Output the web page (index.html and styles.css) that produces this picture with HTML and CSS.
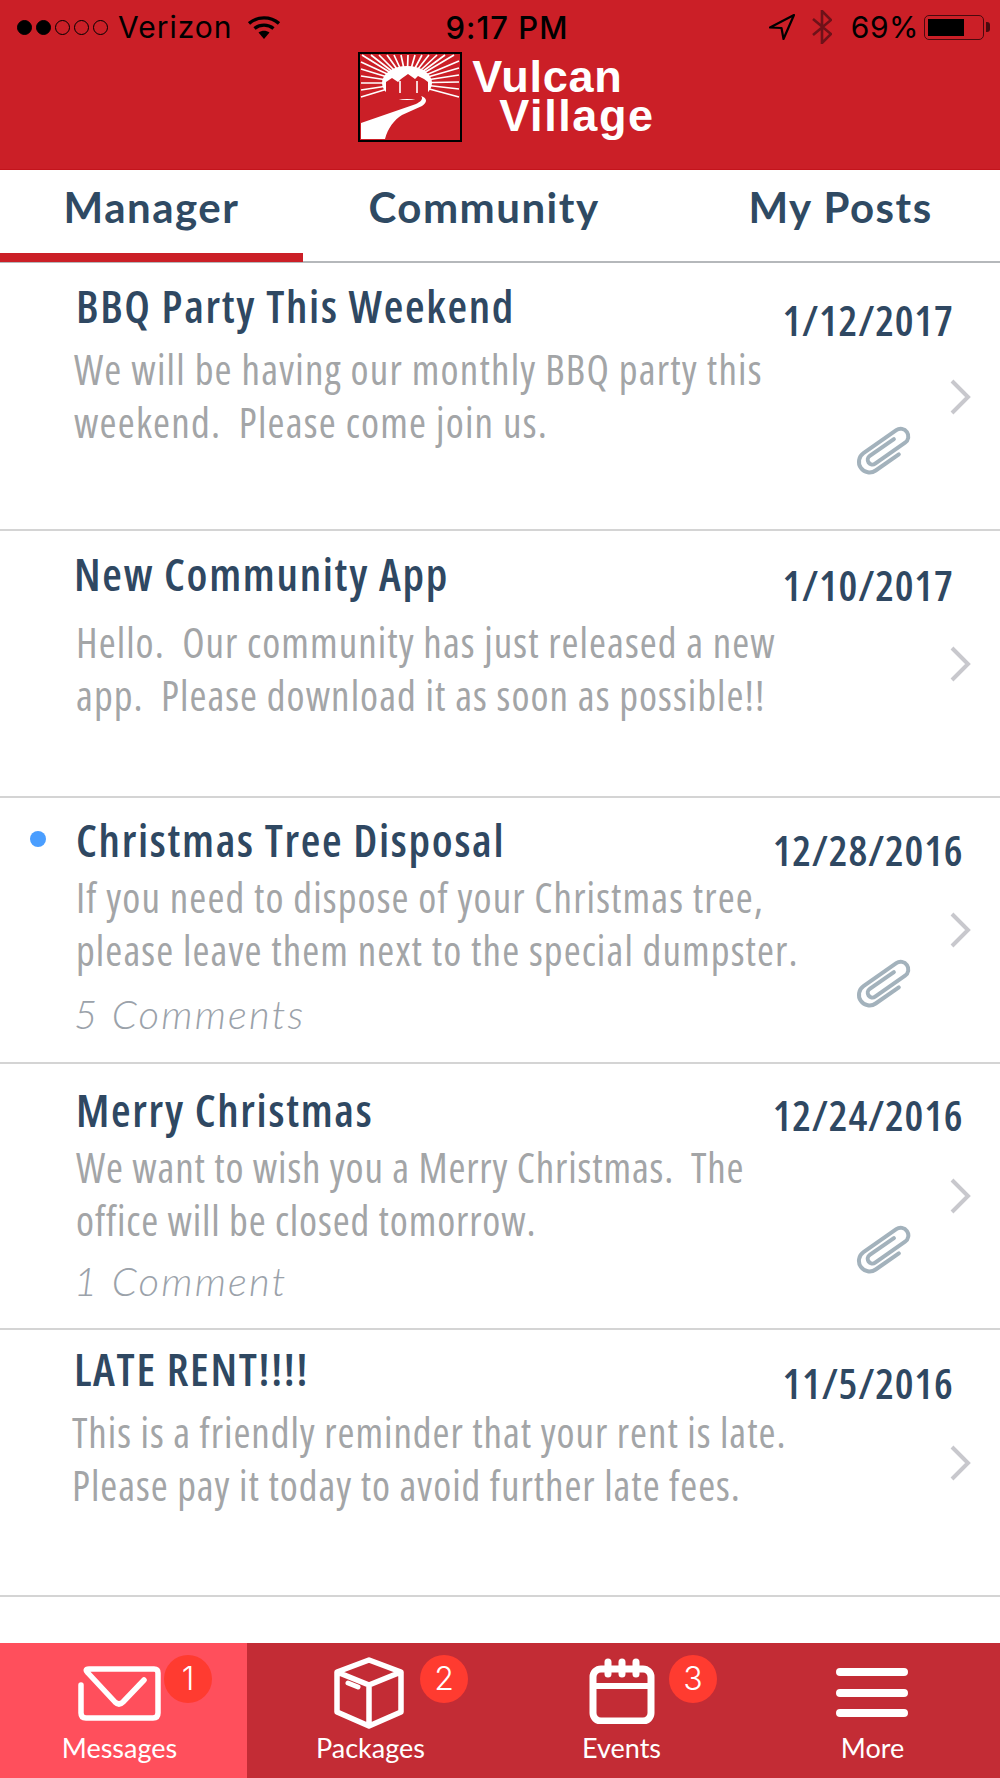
FILE: index.html

```html
<!DOCTYPE html>
<html lang="en">
<head>
  <meta charset="UTF-8">
  <meta name="viewport" content="width=device-width, initial-scale=1.0">
  <title>Vulcan Village</title>
  <link rel="stylesheet" href="styles.css">
</head>
<body>
  <div class="app">
    <header class="header">
      <div class="status">
        <div class="status-left">
          <div class="signal">
            <span class="dot on"></span><span class="dot on"></span><span class="dot"></span><span class="dot"></span><span class="dot"></span>
          </div>
          <span class="carrier">Verizon</span>
          <svg class="wifi" width="32" height="24" viewBox="0 0 32 24">
            <path d="M1 8.5C9.5 1 22.500 1 31 8.500" fill="none" stroke="#000" stroke-width="3.400"/>
            <path d="M6.500 13.500C12 9 20 9 25.500 13.500" fill="none" stroke="#000" stroke-width="3.400"/>
            <path d="M10.500 17.500C14 15 18 15 21.500 17.500L16 24Z" fill="#000"/>
          </svg>
        </div>
        <span class="clock">9:17 PM</span>
        <div class="status-right">
          <svg width="26" height="26" viewBox="0 0 26 26">
            <path d="M25 1L1 13.500L12.500 14L14.500 25Z" fill="none" stroke="#000" stroke-width="2.200" stroke-linejoin="round"/>
          </svg>
          <svg class="bt" width="20" height="34" viewBox="0 0 20 34">
            <path d="M1 9L19 24L10 33V1L19 10L1 25" fill="none" stroke="#6e1219" stroke-width="2.600"/>
          </svg>
          <span class="percent">69%</span>
          <div class="battery"><div class="battery-level"></div></div>
        </div>
      </div>
      <div class="brand">
        <svg class="logo" width="104" height="90" viewBox="0 0 104 90">
          <rect x="1" y="1" width="102" height="88" fill="#cb1f27" stroke="#000" stroke-width="2"/>
          <path d="M49 31L4 3M49 31L13 3M49 31L21 3M49 31L29 3M49 31L36 3M49 31L43 3M49 31L50 3M49 31L57 3M49 31L64 3M49 31L71 3M49 31L79 3M49 31L87 3M49 31L96 3M49 31L3 10M49 31L3 17M49 31L3 24M49 31L3 31M49 31L3 38M49 31L3 45M49 31L101 9M49 31L101 16M49 31L101 23M49 31L101 30M49 31L101 37M49 31L101 45" fill="none" stroke="#fff" stroke-width="1.700"/>
          <ellipse cx="49" cy="31" rx="25" ry="17" fill="#fff"/>
          <path d="M28 47V30L34 26L40 30L43 27L50 22L57 27L60 24L66 27L70 30V47Z" fill="#cb1f27"/>
          <path d="M42 29V41M59 29V41" fill="none" stroke="#fff" stroke-width="1.600"/>
          <path d="M63 44C66 47 62 50 58 52L3 71V87H27C30 76 36 68 44 63L64 54C70 50 69 46 63 44Z" fill="#fff"/>
        </svg>
        <div class="brand-name"><span class="brand-top">Vulcan</span><span class="brand-bottom">Village</span></div>
      </div>
    </header>

    <nav class="tabs">
      <div class="tab active">Manager</div>
      <div class="tab">Community</div>
      <div class="tab last">My Posts</div>
    </nav>

    <div class="list">
      <div class="row row-a">
        <div class="text">
          <div class="title">BBQ Party This Weekend</div>
          <div class="body">We will be having our monthly BBQ party this<br>weekend.&nbsp; Please come join us.</div>
        </div>
        <div class="meta">
          <div class="date">1/12/2017</div>
          <svg class="chevron" width="22" height="36" viewBox="0 0 22 36"><path d="M3 2L19 18L3 34" fill="none" stroke="#c8c8cd" stroke-width="4"/></svg>
          <svg class="clip" width="66" height="52" viewBox="0 0 56 44"><g transform="rotate(-35 28 22) translate(0 9)"><path d="M40 9H15a4 4 0 0 0 0 8H46a6.500 6.500 0 0 0 0 -13H12a9 9 0 0 0 0 18H36" fill="none" stroke="#a3b2bc" stroke-width="3.400" stroke-linecap="round"/></g></svg>
        </div>
      </div>

      <div class="row row-b">
        <div class="text">
          <div class="title">New Community App</div>
          <div class="body">Hello.&nbsp; Our community has just released a new<br>app.&nbsp; Please download it as soon as possible!!</div>
        </div>
        <div class="meta">
          <div class="date">1/10/2017</div>
          <svg class="chevron" width="22" height="36" viewBox="0 0 22 36"><path d="M3 2L19 18L3 34" fill="none" stroke="#c8c8cd" stroke-width="4"/></svg>
        </div>
      </div>

      <div class="row row-c">
        <span class="unread"></span>
        <div class="text">
          <div class="title">Christmas Tree Disposal</div>
          <div class="body">If you need to dispose of your Christmas tree,<br>please leave them next to the special dumpster.</div>
          <div class="comments">5 Comments</div>
        </div>
        <div class="meta">
          <div class="date">12/28/2016</div>
          <svg class="chevron" width="22" height="36" viewBox="0 0 22 36"><path d="M3 2L19 18L3 34" fill="none" stroke="#c8c8cd" stroke-width="4"/></svg>
          <svg class="clip" width="66" height="52" viewBox="0 0 56 44"><g transform="rotate(-35 28 22) translate(0 9)"><path d="M40 9H15a4 4 0 0 0 0 8H46a6.500 6.500 0 0 0 0 -13H12a9 9 0 0 0 0 18H36" fill="none" stroke="#a3b2bc" stroke-width="3.400" stroke-linecap="round"/></g></svg>
        </div>
      </div>

      <div class="row row-d">
        <div class="text">
          <div class="title">Merry Christmas</div>
          <div class="body">We want to wish you a Merry Christmas.&nbsp; The<br>office will be closed tomorrow.</div>
          <div class="comments">1 Comment</div>
        </div>
        <div class="meta">
          <div class="date">12/24/2016</div>
          <svg class="chevron" width="22" height="36" viewBox="0 0 22 36"><path d="M3 2L19 18L3 34" fill="none" stroke="#c8c8cd" stroke-width="4"/></svg>
          <svg class="clip" width="66" height="52" viewBox="0 0 56 44"><g transform="rotate(-35 28 22) translate(0 9)"><path d="M40 9H15a4 4 0 0 0 0 8H46a6.500 6.500 0 0 0 0 -13H12a9 9 0 0 0 0 18H36" fill="none" stroke="#a3b2bc" stroke-width="3.400" stroke-linecap="round"/></g></svg>
        </div>
      </div>

      <div class="row row-e">
        <div class="text">
          <div class="title">LATE RENT!!!!</div>
          <div class="body">This is a friendly reminder that your rent is late.<br>Please pay it today to avoid further late fees.</div>
        </div>
        <div class="meta">
          <div class="date">11/5/2016</div>
          <svg class="chevron" width="22" height="36" viewBox="0 0 22 36"><path d="M3 2L19 18L3 34" fill="none" stroke="#c8c8cd" stroke-width="4"/></svg>
        </div>
      </div>
    </div>

    <footer class="tabbar">
      <div class="bar-item current">
        <svg class="bar-icon icon-mail" width="84" height="56" viewBox="0 0 84 56">
          <path d="M4 20V48Q4 53 9 53H76Q81 53 81 48V8Q81 4 77 4H12Q7 4 11 8L38 37Q42 41 46 37L67 15" fill="none" stroke="#fff" stroke-width="5.500" stroke-linecap="round" stroke-linejoin="round"/>
        </svg>
        <span class="badge badge-1">1</span>
        <span class="bar-label">Messages</span>
      </div>
      <div class="bar-item">
        <svg class="bar-icon icon-box" width="70" height="72" viewBox="0 0 70 72">
          <path d="M35 3L67 15V55L35 69L3 55V15ZM3 15L35 28L67 15M35 28V69" fill="none" stroke="#fff" stroke-width="5.500" stroke-linejoin="round"/>
          <path d="M14 26L24 30" fill="none" stroke="#fff" stroke-width="5" stroke-linecap="round"/>
        </svg>
        <span class="badge badge-2">2</span>
        <span class="bar-label">Packages</span>
      </div>
      <div class="bar-item">
        <svg class="bar-icon icon-cal" width="66" height="66" viewBox="0 0 66 66">
          <rect x="4" y="11" width="58" height="52" rx="8" fill="none" stroke="#fff" stroke-width="7"/>
          <path d="M4 28H62" stroke="#fff" stroke-width="6"/>
          <path d="M19 4V16M33 4V16M47 4V16" stroke="#fff" stroke-width="7" stroke-linecap="round"/>
        </svg>
        <span class="badge badge-3">3</span>
        <span class="bar-label">Events</span>
      </div>
      <div class="bar-item">
        <svg class="bar-icon icon-menu" width="72" height="54" viewBox="0 0 72 54">
          <path d="M4 6H68M4 27H68M4 47H68" stroke="#fff" stroke-width="8" stroke-linecap="round"/>
        </svg>
        <span class="bar-label">More</span>
      </div>
    </footer>
  </div>
</body>
</html>
```

FILE: styles.css

```css
* {
  box-sizing: border-box;
}
body {
  margin: 0;
  background: #fff;
  font-family: "Open Sans", sans-serif;
}
.app {
  width: 1000px;
  height: 1778px;
  display: flex;
  flex-direction: column;
  overflow: hidden;
}

/* header */
.header {
  height: 170px;
  background: #cb1f27;
  border-bottom: 1px solid #c3141c;
}
.status {
  height: 52px;
  padding: 6px 16px 4px 17px;
  display: flex;
  justify-content: space-between;
  align-items: center;
  color: #000;
  font-family: Inter, sans-serif;
  font-size: 30px;
  letter-spacing: 1px;
}
.status-left, .status-right {
  width: 330px;
  display: flex;
  align-items: center;
}
.status-right {
  justify-content: flex-end;
}
.signal {
  display: flex;
  gap: 4px;
  margin-right: 10px;
}
.dot {
  width: 15px;
  height: 15px;
  border-radius: 50%;
  border: 1.500px solid #000;
}
.dot.on {
  background: #000;
}
.carrier {
  margin-right: 15px;
}
.clock {
  margin-left: 13px;
  font-weight: 500;
  font-size: 31px;
}
.bt {
  margin: 0 19px 0 17px;
}
.percent {
  margin-right: 5px;
  letter-spacing: 0.5px;
}
.battery {
  width: 60px;
  height: 25px;
  padding: 3px;
  border: 1.500px solid #4a0a0e;
  border-radius: 5px;
  position: relative;
}
.battery::after {
  content: "";
  position: absolute;
  right: -7px;
  top: 6px;
  width: 4px;
  height: 10px;
  background: #4a0a0e;
  border-radius: 0 3px 3px 0;
}
.battery-level {
  width: 69%;
  height: 100%;
  background: #000;
}
.brand {
  display: flex;
  justify-content: center;
  padding-left: 13px;
}
.brand-name {
  margin-left: 10px;
  padding-top: 5px;
  display: flex;
  flex-direction: column;
  font-family: "Liberation Sans", sans-serif;
  font-weight: 700;
  font-size: 45px;
  letter-spacing: 0.7px;
  line-height: 39px;
  color: #fff;
}
.brand-bottom {
  margin-left: 27px;
  letter-spacing: 1.600px;
}

/* tabs */
.tabs {
  height: 93px;
  display: grid;
  grid-template-columns: 303px 362px 335px;
  border-bottom: 2px solid #b5b8bb;
}
.tab {
  padding-top: 6px;
  height: 92px;
  text-align: center;
  font-family: Lato, sans-serif;
  font-weight: 700;
  font-size: 42px;
  letter-spacing: 1.500px;
  line-height: 62px;
  color: #2f4a63;
}
.tab.active {
  border-bottom: 9px solid #cb1f27;
}
.tab.last {
  padding-left: 16px;
}

/* message list */
.list {
  flex: 1;
  padding-top: 2px;
}
.row {
  height: 266px;
  position: relative;
  display: flex;
  justify-content: space-between;
  padding-left: 76px;
  border-bottom: 2px solid #d4d4d4;
}
.text {
  flex: 1;
  min-width: 0;
}
.title {
  font-weight: 600;
  font-stretch: 75%;
  font-size: 45px;
  letter-spacing: 1.700px;
  line-height: 50px;
  color: #2f4862;
}
.body {
  font-stretch: 75%;
  font-size: 41px;
  line-height: 53px;
  white-space: nowrap;
  color: #a3a5a7;
}
.comments {
  margin-top: 12px;
  margin-left: -2px;
  font-family: Lato, sans-serif;
  font-style: italic;
  font-weight: 300;
  font-size: 40px;
  letter-spacing: 2.200px;
  line-height: 50px;
  color: #9ba2aa;
}
.unread {
  position: absolute;
  left: 30px;
  top: 33px;
  width: 16px;
  height: 16px;
  border-radius: 50%;
  background: #4a9eff;
}
.meta {
  flex: none;
  width: 216px;
  margin-right: 24px;
  display: flex;
  flex-direction: column;
  align-items: center;
}
.date {
  font-weight: 600;
  font-stretch: 75%;
  font-size: 42px;
  letter-spacing: 0.800px;
  line-height: 50px;
  color: #2f4862;
}
.chevron {
  align-self: flex-end;
  margin-right: 5px;
}
.clip {
  margin-top: 10px;
  margin-left: 34px;
}

/* per row offsets, the rows are not quite even */
.row-a .text { padding-top: 16px; }
.row-a .body { margin-top: 12px; margin-left: -2px; letter-spacing: 1.200px; }
.row-a .meta { padding-top: 30px; }
.row-a .chevron { margin-top: 34px; }

.row-b { height: 267px; }
.row-b .text { padding-top: 18px; }
.row-b .title { margin-left: -2px; }
.row-b .body { margin-top: 17px; letter-spacing: 1.050px; }
.row-b .meta { padding-top: 29px; }
.row-b .chevron { margin-top: 36px; }

.row-c .text { padding-top: 17px; }
.row-c .body { margin-top: 6px; letter-spacing: 1.100px; }
.row-c .meta { padding-top: 27px; }
.row-c .chevron { margin-top: 37px; }

.row-d .text { padding-top: 21px; }
.row-d .body { margin-top: 6px; letter-spacing: 0.850px; }
.row-d .comments { margin-top: 9px; }
.row-d .meta { padding-top: 26px; }
.row-d .chevron { margin-top: 38px; }

.row-e { height: 267px; }
.row-e .text { padding-top: 14px; }
.row-e .title { margin-left: -2px; }
.row-e .body { margin-top: 12px; margin-left: -4px; letter-spacing: 0.950px; }
.row-e .meta { padding-top: 28px; }
.row-e .chevron { margin-top: 37px; }

/* bottom bar */
.tabbar {
  height: 135px;
  display: grid;
  grid-template-columns: 247px 1fr 1fr 1fr;
  background: #c32c35;
  color: #fff;
}
.bar-item {
  position: relative;
  height: 135px;
  padding: 12px 4px 0 0;
  display: flex;
  flex-direction: column;
  align-items: center;
  justify-content: space-between;
}
.bar-item.current {
  background: #ff4f5c;
  padding-right: 8px;
}
.icon-mail { margin-top: 10px; margin-right: 2px; }
.icon-box { margin-top: 2px; margin-right: 4px; }
.icon-cal { margin-top: 3px; }
.icon-menu { margin-top: 11px; margin-right: 2px; }
.bar-label {
  padding-bottom: 12px;
  font-family: Lato, sans-serif;
  font-size: 27px;
  line-height: 36px;
}
.badge {
  position: absolute;
  top: 12px;
  width: 48px;
  height: 48px;
  border-radius: 50%;
  background: #ff3b30;
  text-align: center;
  font-family: Inter, sans-serif;
  font-weight: 300;
  font-size: 32px;
  line-height: 48px;
}
.badge-1 { left: 164px; }
.badge-2 { left: 173px; }
.badge-3 { left: 171px; }
```
